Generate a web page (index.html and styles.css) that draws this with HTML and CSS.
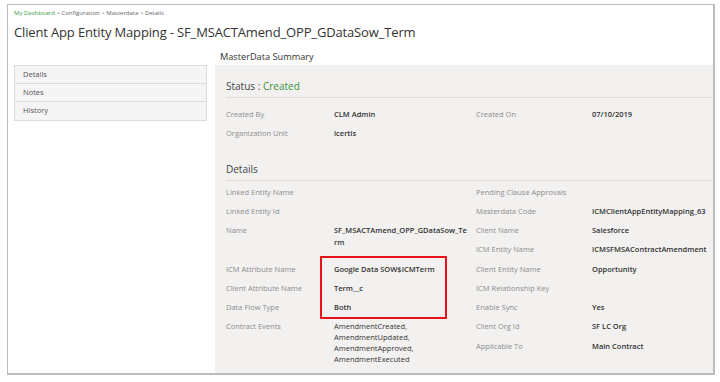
FILE: index.html
```html
<!DOCTYPE html>
<html>
<head>
<meta charset="utf-8">
<link rel="stylesheet" href="styles.css">
</head>
<body>
<div class="frame">
  <div class="crumbs"><span class="home">My Dashboard</span> &gt; Configuration &gt; Masterdata &gt; Details</div>
  <h1 class="title">Client App Entity Mapping - SF_MSACTAmend_OPP_GDataSow_Term</h1>
  <div class="main">
    <div class="nav">
      <div class="nav-item">Details</div>
      <div class="nav-item">Notes</div>
      <div class="nav-item">History</div>
    </div>
    <div class="content">
      <div class="summary-title">MasterData Summary</div>
      <div class="panel">
        <div class="sec-head">Status : <span class="ok">Created</span></div>
        <div class="grid status-grid">
          <div class="lbl">Created By</div><div class="val">CLM Admin</div><div class="lbl">Created On</div><div class="val">07/10/2019</div>
          <div class="lbl">Organization Unit</div><div class="val">icertis</div><div></div><div></div>
        </div>
        <div class="sec-head details-head">Details</div>
        <div class="grid">
          <div class="lbl">Linked Entity Name</div><div class="val"></div><div class="lbl">Pending Clause Approvals</div><div class="val"></div>
          <div class="lbl">Linked Entity Id</div><div class="val"></div><div class="lbl">Masterdata Code</div><div class="val">ICMClientAppEntityMapping_63</div>
          <div class="lbl">Name</div><div class="val wrap">SF_MSACTAmend_OPP_GDataSow_Term</div><div class="lbl">Client Name</div><div class="val">Salesforce</div>
          <div></div><div></div><div class="lbl">ICM Entity Name</div><div class="val">ICMSFMSAContractAmendment</div>
          <div class="lbl">ICM Attribute Name</div><div class="val">Google Data SOW$ICMTerm</div><div class="lbl">Client Entity Name</div><div class="val">Opportunity</div>
          <div class="lbl">Client Attribute Name</div><div class="val">Term__c</div><div class="lbl">ICM Relationship Key</div><div class="val"></div>
          <div class="lbl">Data Flow Type</div><div class="val">Both</div><div class="lbl">Enable Sync</div><div class="val">Yes</div>
          <div class="lbl">Contract Events</div><div class="val events">AmendmentCreated,<br>AmendmentUpdated,<br>AmendmentApproved,<br>AmendmentExecuted</div><div class="lbl">Client Org Id</div><div class="val">SF LC Org</div>
          <div></div><div></div><div class="lbl">Applicable To</div><div class="val">Main Contract</div>
        </div>
        <div class="highlight"></div>
      </div>
    </div>
  </div>
</div>
</body>
</html>
```
FILE: styles.css
```css
* { box-sizing: border-box; }
html, body { margin: 0; padding: 0; background: #fff; }
body {
  font-family: "Open Sans", "Noto Sans", sans-serif;
  color: #333;
  width: 720px;
  height: 382px;
  overflow: hidden;
}
.frame {
  margin: 4px 0 0 7px;
  width: 708px;
  height: 371px;
  border: 1px solid #bdbdbd;
  border-right-width: 2px;
  border-bottom-width: 2px;
  padding: 4px 0 0 6px;
  overflow: hidden;
  display: flex;
  flex-direction: column;
}
.crumbs {
  font-size: 6px;
  line-height: 8px;
  color: #666;
}
.crumbs .home { color: #3f9a3f; }
.title {
  margin: 6px 0 0 0;
  font-size: 13px;
  letter-spacing: -0.15px;
  font-weight: 400;
  line-height: 18px;
  color: #333;
}
.main {
  margin-top: 9px;
  display: flex;
  flex: 1;
  gap: 8px;
}
.nav {
  width: 193px;
  margin-top: 15px;
  align-self: flex-start;
  border: 1px solid #dcdcdc;
  background: #f5f5f5;
}
.nav-item {
  height: 18px;
  line-height: 17px;
  font-size: 7.5px;
  color: #555;
  padding-left: 8px;
  border-bottom: 1px solid #dcdcdc;
}
.nav-item:last-child { border-bottom: none; }
.content {
  flex: 1;
  display: flex;
  flex-direction: column;
}
.summary-title {
  font-size: 9.2px;
  line-height: 14px;
  color: #333;
  padding-left: 5px;
  height: 15px;
}
.panel {
  position: relative;
  flex: 1;
  background: #f2f1f0;
  padding: 12px 0 0 11px;
}
.sec-head {
  font-size: 10px;
  line-height: 18px;
  color: #444;
  border-bottom: 1px solid #dedddc;
  padding-bottom: 2px;
}
.sec-head .ok { color: #3a8f3a; }
.details-head { margin-top: 12px; }
.grid {
  display: grid;
  grid-template-columns: 108px 142px 116px 1fr;
  grid-auto-rows: 19.25px;
  margin-top: 6px;
}
.status-grid { margin-top: 11px; }
.lbl, .val {
  font-size: 7.5px;
  line-height: 11.5px;
  white-space: nowrap;
}
.lbl { color: #8c8c8c; }
.val { color: #333; font-weight: 600; }
.val.wrap {
  white-space: normal;
  word-break: break-all;
  padding-right: 6px;
}
.val.events {
  font-weight: 400;
  line-height: 11px;
  color: #333;
}
.highlight {
  position: absolute;
  left: 105px;
  top: 191px;
  width: 127px;
  height: 63px;
  border: 2px solid #e8121b;
}
```
